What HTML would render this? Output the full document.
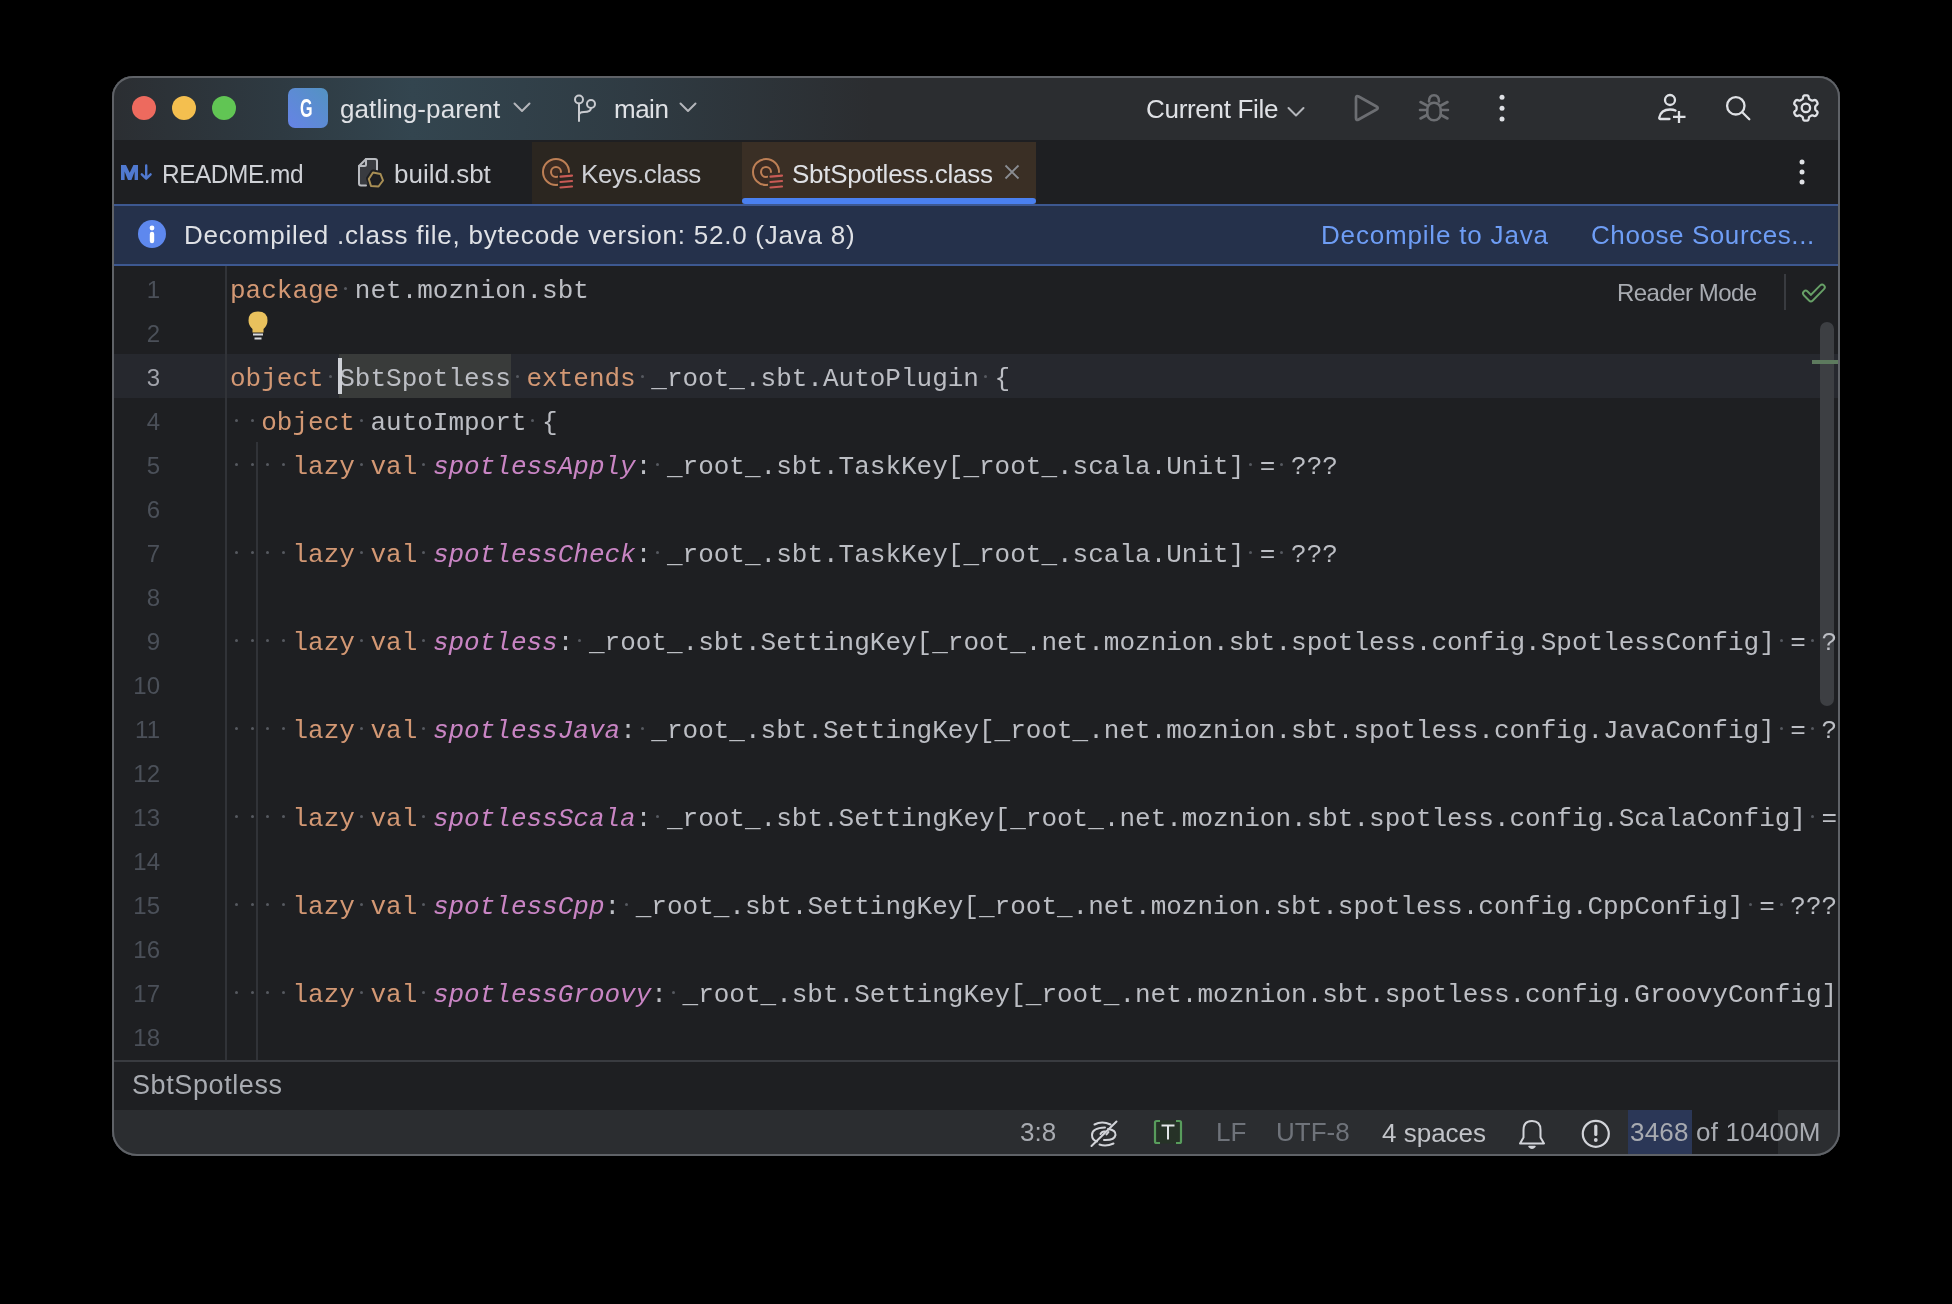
<!DOCTYPE html>
<html><head><meta charset="utf-8">
<style>
*{margin:0;padding:0;box-sizing:border-box}
html,body{width:1952px;height:1304px;background:#000;overflow:hidden}
body{font-family:"Liberation Sans",sans-serif;position:relative}
#win{will-change:transform}
.abs{position:absolute}
#win{position:absolute;left:112px;top:76px;width:1728px;height:1080px;border-radius:21px 21px 25px 25px;background:#1e1f22;overflow:hidden;box-shadow:inset 0 0 0 2px #5d6066}
#title{position:absolute;left:0;top:0;width:1728px;height:64px;background:linear-gradient(90deg,#2b2e32 0px,#2e3a42 170px,#33454f 300px,#2f3b43 520px,#2b2d30 760px,#2b2d30 100%)}
.tl{position:absolute;top:20px;width:24px;height:24px;border-radius:50%}
.ui{position:absolute;white-space:pre;color:#dfe1e5;font-size:26px;line-height:30px}
#tabs{position:absolute;left:0;top:64px;width:1728px;height:64px;background:#1e1f22}
#banner{position:absolute;left:0;top:128px;width:1728px;height:62px;background:#25314b;border-top:2px solid #3d5891;border-bottom:2px solid #3d5891}
#editor{position:absolute;left:0;top:190px;width:1728px;height:794px;background:#1e1f22;overflow:hidden}
.code{position:absolute;z-index:1;left:118px;top:0;width:1607px;height:795px;overflow:hidden;font-family:"Liberation Mono",monospace;font-size:26px;color:#bcbec4}
.ln{position:absolute;left:0;height:44px;line-height:44px;white-space:pre;padding-top:3px}
.ln b.k{font-weight:normal;color:#d39874}
.ln em{font-style:italic;color:#c985c4}
.hl{position:relative}.hl::before{content:"";position:absolute;left:0;right:0;top:-10px;height:44px;background:#393b3a;z-index:-1}
i.d{font-style:normal;position:relative}
i.d::after{content:"";position:absolute;left:5px;top:11px;width:3px;height:3px;border-radius:1.5px;background:#565960}
.nums{position:absolute;left:0;top:0;width:48px;font-family:"Liberation Sans",sans-serif;font-size:24px;color:#4b5059}
.num{position:absolute;right:0;height:44px;line-height:44px;padding-top:2px;white-space:pre;text-align:right;width:60px}
.num.cur{color:#a1a3ab}
#crumbs{position:absolute;left:0;top:984px;width:1728px;height:50px;background:#1e1f22;border-top:2px solid #393b40}
#status{position:absolute;left:0;top:1034px;width:1728px;height:46px;background:#2b2d30}
#border{position:absolute;left:112px;top:76px;width:1728px;height:1080px;border-radius:21px 21px 25px 25px;border:2px solid #5f6267;pointer-events:none}
</style></head><body>
<div id="win">
  <div id="title">
    <div class="tl" style="left:20px;background:#ed6a5e"></div>
    <div class="tl" style="left:60px;background:#f4bf4f"></div>
    <div class="tl" style="left:100px;background:#61c554"></div>
    <div class="abs" style="left:176px;top:12px;width:40px;height:40px;border-radius:7px;background:linear-gradient(45deg,#6683e6,#5393c2)"></div>
    <div class="ui" style="left:188px;top:17px;color:#fff;font-size:26px;font-weight:bold;transform:scaleX(0.62);transform-origin:left">G</div>
    <div class="ui" style="left:228px;top:18px;letter-spacing:0.1px">gatling-parent</div>
    <div class="ui" style="left:502px;top:18px;letter-spacing:-0.5px">main</div>
    <div class="ui" style="left:1034px;top:18px;letter-spacing:-0.3px">Current File</div>
  </div>
  <div id="tabs">
    <div class="abs" style="left:420px;top:2px;width:210px;height:62px;background:#2b2620"></div>
    <div class="abs" style="left:630px;top:2px;width:294px;height:62px;background:#3a2f25"></div>
    <div class="abs" style="left:630px;top:58px;width:294px;height:6px;border-radius:3px;background:#4a80f0"></div>
    <div class="ui" style="left:50px;top:19px;color:#cfd1d6;letter-spacing:-0.5px;transform:scaleX(0.94);transform-origin:left">README.md</div>
    <div class="ui" style="left:282px;top:19px;color:#cfd1d6">build.sbt</div>
    <div class="ui" style="left:469px;top:19px;color:#cfd1d6;letter-spacing:-0.44px">Keys.class</div>
    <div class="ui" style="left:680px;top:19px;color:#dfe1e5;letter-spacing:-0.27px">SbtSpotless.class</div>
  </div>
  <div id="banner">
    <div class="ui" style="left:72px;top:14px;color:#dfe1e5;letter-spacing:0.78px">Decompiled .class file, bytecode version: 52.0 (Java 8)</div>
    <div class="ui" style="left:1209px;top:14px;color:#6e9df5;letter-spacing:0.82px">Decompile to Java</div>
    <div class="ui" style="left:1479px;top:14px;color:#6e9df5;letter-spacing:0.58px">Choose Sources...</div>
  </div>
  <div id="editor">
    <div class="abs" style="left:0;top:88px;width:1728px;height:44px;background:#26282e"></div>
    <div class="abs" style="left:113px;top:0;width:2px;height:795px;background:#313338"></div>
    <div class="abs" style="left:144px;top:176px;width:2px;height:619px;background:#313338"></div>
    <div class="nums"><div class="num" style="top:0px">1</div>
<div class="num" style="top:44px">2</div>
<div class="num cur" style="top:88px">3</div>
<div class="num" style="top:132px">4</div>
<div class="num" style="top:176px">5</div>
<div class="num" style="top:220px">6</div>
<div class="num" style="top:264px">7</div>
<div class="num" style="top:308px">8</div>
<div class="num" style="top:352px">9</div>
<div class="num" style="top:396px">10</div>
<div class="num" style="top:440px">11</div>
<div class="num" style="top:484px">12</div>
<div class="num" style="top:528px">13</div>
<div class="num" style="top:572px">14</div>
<div class="num" style="top:616px">15</div>
<div class="num" style="top:660px">16</div>
<div class="num" style="top:704px">17</div>
<div class="num" style="top:748px">18</div></div>
    <div class="code"><div class="ln" style="top:0px"><b class="k">package</b><i class="d"> </i>net.moznion.sbt</div>
<div class="ln" style="top:44px"></div>
<div class="ln" style="top:88px"><b class="k">object</b><i class="d"> </i><span class="hl">SbtSpotless</span><i class="d"> </i><b class="k">extends</b><i class="d"> </i>_root_.sbt.AutoPlugin<i class="d"> </i>{</div>
<div class="ln" style="top:132px"><i class="d"> </i><i class="d"> </i><b class="k">object</b><i class="d"> </i>autoImport<i class="d"> </i>{</div>
<div class="ln" style="top:176px"><i class="d"> </i><i class="d"> </i><i class="d"> </i><i class="d"> </i><b class="k">lazy</b><i class="d"> </i><b class="k">val</b><i class="d"> </i><em>spotlessApply</em>:<i class="d"> </i>_root_.sbt.TaskKey[_root_.scala.Unit]<i class="d"> </i>=<i class="d"> </i>???</div>
<div class="ln" style="top:220px"></div>
<div class="ln" style="top:264px"><i class="d"> </i><i class="d"> </i><i class="d"> </i><i class="d"> </i><b class="k">lazy</b><i class="d"> </i><b class="k">val</b><i class="d"> </i><em>spotlessCheck</em>:<i class="d"> </i>_root_.sbt.TaskKey[_root_.scala.Unit]<i class="d"> </i>=<i class="d"> </i>???</div>
<div class="ln" style="top:308px"></div>
<div class="ln" style="top:352px"><i class="d"> </i><i class="d"> </i><i class="d"> </i><i class="d"> </i><b class="k">lazy</b><i class="d"> </i><b class="k">val</b><i class="d"> </i><em>spotless</em>:<i class="d"> </i>_root_.sbt.SettingKey[_root_.net.moznion.sbt.spotless.config.SpotlessConfig]<i class="d"> </i>=<i class="d"> </i>???</div>
<div class="ln" style="top:396px"></div>
<div class="ln" style="top:440px"><i class="d"> </i><i class="d"> </i><i class="d"> </i><i class="d"> </i><b class="k">lazy</b><i class="d"> </i><b class="k">val</b><i class="d"> </i><em>spotlessJava</em>:<i class="d"> </i>_root_.sbt.SettingKey[_root_.net.moznion.sbt.spotless.config.JavaConfig]<i class="d"> </i>=<i class="d"> </i>???</div>
<div class="ln" style="top:484px"></div>
<div class="ln" style="top:528px"><i class="d"> </i><i class="d"> </i><i class="d"> </i><i class="d"> </i><b class="k">lazy</b><i class="d"> </i><b class="k">val</b><i class="d"> </i><em>spotlessScala</em>:<i class="d"> </i>_root_.sbt.SettingKey[_root_.net.moznion.sbt.spotless.config.ScalaConfig]<i class="d"> </i>=<i class="d"> </i>???</div>
<div class="ln" style="top:572px"></div>
<div class="ln" style="top:616px"><i class="d"> </i><i class="d"> </i><i class="d"> </i><i class="d"> </i><b class="k">lazy</b><i class="d"> </i><b class="k">val</b><i class="d"> </i><em>spotlessCpp</em>:<i class="d"> </i>_root_.sbt.SettingKey[_root_.net.moznion.sbt.spotless.config.CppConfig]<i class="d"> </i>=<i class="d"> </i>???</div>
<div class="ln" style="top:660px"></div>
<div class="ln" style="top:704px"><i class="d"> </i><i class="d"> </i><i class="d"> </i><i class="d"> </i><b class="k">lazy</b><i class="d"> </i><b class="k">val</b><i class="d"> </i><em>spotlessGroovy</em>:<i class="d"> </i>_root_.sbt.SettingKey[_root_.net.moznion.sbt.spotless.config.GroovyConfig]<i class="d"> </i>=<i class="d"> </i>???</div>
<div class="ln" style="top:748px"></div></div>
    <div class="abs" style="z-index:2;left:226px;top:92px;width:4px;height:36px;background:#ced0d6"></div>
    
    <div class="ui" style="left:1505px;top:0px;height:44px;line-height:44px;padding-top:5px;color:#a8abb1;font-size:24px;letter-spacing:-0.53px">Reader Mode</div>
    <div class="abs" style="left:1672px;top:8px;width:2px;height:36px;background:#393b40"></div>
    <div class="abs" style="left:1708px;top:56px;width:14px;height:384px;border-radius:7px;background:#3d3f43"></div>
    <div class="abs" style="left:1700px;top:94px;width:28px;height:4px;background:#5d7a5e"></div>
  </div>
  <div id="crumbs">
    <div class="ui" style="left:20px;top:8px;color:#a8abb1;font-size:27px;letter-spacing:0.6px">SbtSpotless</div>
  </div>
  <div id="status">
    <div class="ui" style="left:908px;top:7px;color:#a8abb1">3:8</div>
    <div class="ui" style="left:1104px;top:7px;color:#6f737a">LF</div>
    <div class="ui" style="left:1164px;top:7px;color:#6f737a">UTF-8</div>
    <div class="ui" style="left:1270px;top:8px;color:#c2c4c9">4 spaces</div>
    <div class="abs" style="left:1516px;top:0;width:64px;height:46px;background:#2b3757"></div>
    <div class="abs" style="left:1580px;top:0;width:86px;height:46px;background:#1e1f22"></div>
    <div class="ui" style="left:1518px;top:7px;color:#a8abb1;letter-spacing:0.2px">3468 of 10400M</div>
  </div>
</div>
<div id="border"></div>
<svg style="position:absolute;left:0;top:0;z-index:10" width="1952" height="1304" viewBox="0 0 1952 1304">
<g fill="none" stroke-linecap="round" stroke-linejoin="round">
  <!-- title chevrons -->
  <path d="M514.5 103.5 L522 111 L529.5 103.5" stroke="#b4b6bb" stroke-width="2"/>
  <path d="M680.5 103.5 L688 111 L695.5 103.5" stroke="#b4b6bb" stroke-width="2"/>
  <path d="M1288.5 108 L1296 115.5 L1303.5 108" stroke="#b4b6bb" stroke-width="2"/>
  <!-- branch -->
  <g stroke="#c9cbd0" stroke-width="2">
    <circle cx="579" cy="99.5" r="4"/>
    <circle cx="591" cy="104" r="4"/>
    <path d="M579 103.5 V121 M579 115 Q579 112 584 112 Q591 112 591 108"/>
  </g>
  <!-- play -->
  <path d="M1356 98 Q1356 95 1358.6 96.5 L1376.5 106.5 Q1379 108 1376.5 109.5 L1358.6 119.5 Q1356 121 1356 118 Z" stroke="#6c6e72" stroke-width="2.7"/>
  <!-- bug -->
  <g stroke="#6c6e72" stroke-width="2.6">
    <path d="M1429 101.5 Q1429 95.2 1434 95.2 Q1439 95.2 1439 101.5"/>
    <rect x="1427.3" y="102.8" width="13.4" height="17.4" rx="6.5"/>
    <path d="M1420.5 102 L1427 105.5 M1420 110 H1427 M1420.5 118.5 L1427 115 M1447.5 102 L1441 105.5 M1448 110 H1441 M1447.5 118.5 L1441 115"/>
  </g>
  <!-- kebab -->
  <g fill="#dfe1e5" stroke="none"><circle cx="1502" cy="97.3" r="2.5"/><circle cx="1502" cy="108.2" r="2.5"/><circle cx="1502" cy="119" r="2.5"/></g>
  <!-- person add -->
  <g stroke="#dfe1e5" stroke-width="2.3">
    <circle cx="1670" cy="100" r="5"/>
    <path d="M1669.5 119 H1660 Q1659 119 1659.3 117.5 Q1661 109.5 1670 109.5 Q1673.5 109.5 1675.5 110.5"/>
    <path d="M1679 111 V123 M1673 116.8 H1685.5" stroke-linecap="butt"/>
  </g>
  <!-- search -->
  <g stroke="#dfe1e5" stroke-width="2.3">
    <circle cx="1735.8" cy="105.8" r="8.7"/>
    <path d="M1742.5 112.5 L1749.3 119.3"/>
  </g>
  <!-- gear -->
  <g stroke="#dfe1e5" stroke-width="2.3">
    <path d="M1815.20 108.00 L1815.20 107.68 L1815.20 107.35 L1815.20 107.02 L1815.24 106.69 L1815.36 106.33 L1815.65 105.93 L1816.19 105.43 L1816.85 104.86 L1817.34 104.28 L1817.55 103.76 L1817.55 103.29 L1817.45 102.86 L1817.30 102.44 L1817.11 102.04 L1816.90 101.65 L1816.67 101.27 L1816.41 100.91 L1816.13 100.57 L1815.80 100.26 L1815.39 100.03 L1814.84 99.95 L1814.10 100.09 L1813.27 100.37 L1812.57 100.59 L1812.07 100.64 L1811.71 100.57 L1811.40 100.43 L1811.11 100.27 L1810.83 100.11 L1810.55 99.95 L1810.27 99.78 L1809.99 99.62 L1809.70 99.45 L1809.43 99.25 L1809.19 98.97 L1808.98 98.52 L1808.82 97.80 L1808.66 96.94 L1808.40 96.23 L1808.05 95.79 L1807.65 95.55 L1807.22 95.42 L1806.78 95.35 L1806.34 95.31 L1805.90 95.30 L1805.46 95.31 L1805.02 95.35 L1804.58 95.42 L1804.15 95.55 L1803.75 95.79 L1803.40 96.23 L1803.14 96.94 L1802.98 97.80 L1802.82 98.52 L1802.61 98.97 L1802.37 99.25 L1802.10 99.45 L1801.81 99.62 L1801.53 99.78 L1801.25 99.95 L1800.97 100.11 L1800.69 100.27 L1800.40 100.43 L1800.09 100.57 L1799.73 100.64 L1799.23 100.59 L1798.53 100.37 L1797.70 100.09 L1796.96 99.95 L1796.41 100.03 L1796.00 100.26 L1795.67 100.57 L1795.39 100.91 L1795.13 101.27 L1794.90 101.65 L1794.69 102.04 L1794.50 102.44 L1794.35 102.86 L1794.25 103.29 L1794.25 103.76 L1794.46 104.28 L1794.95 104.86 L1795.61 105.43 L1796.15 105.93 L1796.44 106.33 L1796.56 106.69 L1796.60 107.02 L1796.60 107.35 L1796.60 107.68 L1796.60 108.00 L1796.60 108.32 L1796.60 108.65 L1796.60 108.98 L1796.56 109.31 L1796.44 109.67 L1796.15 110.07 L1795.61 110.57 L1794.95 111.14 L1794.46 111.72 L1794.25 112.24 L1794.25 112.71 L1794.35 113.14 L1794.50 113.56 L1794.69 113.96 L1794.90 114.35 L1795.13 114.73 L1795.39 115.09 L1795.67 115.43 L1796.00 115.74 L1796.41 115.97 L1796.96 116.05 L1797.70 115.91 L1798.53 115.63 L1799.23 115.41 L1799.73 115.36 L1800.09 115.43 L1800.40 115.57 L1800.69 115.73 L1800.97 115.89 L1801.25 116.05 L1801.53 116.22 L1801.81 116.38 L1802.10 116.55 L1802.37 116.75 L1802.61 117.03 L1802.82 117.48 L1802.98 118.20 L1803.14 119.06 L1803.40 119.77 L1803.75 120.21 L1804.15 120.45 L1804.58 120.58 L1805.02 120.65 L1805.46 120.69 L1805.90 120.70 L1806.34 120.69 L1806.78 120.65 L1807.22 120.58 L1807.65 120.45 L1808.05 120.21 L1808.40 119.77 L1808.66 119.06 L1808.82 118.20 L1808.98 117.48 L1809.19 117.03 L1809.43 116.75 L1809.70 116.55 L1809.99 116.38 L1810.27 116.22 L1810.55 116.05 L1810.83 115.89 L1811.11 115.73 L1811.40 115.57 L1811.71 115.43 L1812.07 115.36 L1812.57 115.41 L1813.27 115.63 L1814.10 115.91 L1814.84 116.05 L1815.39 115.97 L1815.80 115.74 L1816.13 115.43 L1816.41 115.09 L1816.67 114.73 L1816.90 114.35 L1817.11 113.96 L1817.30 113.56 L1817.45 113.14 L1817.55 112.71 L1817.55 112.24 L1817.34 111.72 L1816.85 111.14 L1816.19 110.57 L1815.65 110.07 L1815.36 109.67 L1815.24 109.31 L1815.20 108.98 L1815.20 108.65 L1815.20 108.32 Z"/>
    <circle cx="1805.9" cy="107.9" r="4.2"/>
  </g>

  <!-- tabs: M down -->
  <path d="M121 180 V165 H126 L129.7 172.8 L133.4 165 H138 V180 H134.6 V171.5 L131.4 180 H128 L124.6 171.5 V180 Z" fill="#5079d0" stroke="none"/>
  <path d="M146.2 165.5 V178.5 M141.8 174.3 L146.2 178.7 L150.6 174.3" stroke="#5079d0" stroke-width="2.4"/>
  <!-- build.sbt file icon -->
  <path d="M366 185.5 H361 Q359 185.5 359 183.5 V166 L366 159 H375 Q377 159 377 161 V172" stroke="#b9bbc0" stroke-width="2" fill="#393b40"/>
  <path d="M359 166 H364.5 Q366 166 366 164.5 V159" stroke="#b9bbc0" stroke-width="2"/>
  <path d="M373 172 L380.5 173.5 L383 180 L379 186 L371 185.5 L368.5 178.5 Z" stroke="#1e1f22" stroke-width="5" fill="#1e1f22"/>
  <path d="M373 172.5 L380.5 174 L383 180.5 L378.5 186.5 L371 186 L368.8 179 Z" stroke="#a98f55" stroke-width="2"/>
  <!-- class icons -->
  <g>
    <circle cx="556" cy="172" r="13" stroke="#bd7f55" stroke-width="2" fill="#3b2b22"/>
    <circle cx="556" cy="172" r="5" stroke="#bd7f55" stroke-width="2"/>
    <path d="M558 172.8 H574 V191 H558 Z" fill="#2b2620" stroke="none"/>
    <path d="M560.5 176.6 L572 175.6 M560.5 182 L572 181 M560.5 187.5 L572 186.5" stroke="#c85a55" stroke-width="2.2" stroke-linecap="round"/>
  </g>
  <g>
    <circle cx="766" cy="172" r="13" stroke="#bd7f55" stroke-width="2" fill="#3b2b22"/>
    <circle cx="766" cy="172" r="5" stroke="#bd7f55" stroke-width="2"/>
    <path d="M768 172.8 H784 V191 H768 Z" fill="#3a2f25" stroke="none"/>
    <path d="M770.5 176.6 L782 175.6 M770.5 182 L782 181 M770.5 187.5 L782 186.5" stroke="#c85a55" stroke-width="2.2" stroke-linecap="round"/>
  </g>
  <!-- close x -->
  <path d="M1005.5 165.5 L1018.5 178.5 M1018.5 165.5 L1005.5 178.5" stroke="#8a8d92" stroke-width="1.8" stroke-linecap="butt"/>
  <!-- tab kebab -->
  <g fill="#dfe1e5" stroke="none"><circle cx="1802" cy="162" r="2.5"/><circle cx="1802" cy="172" r="2.5"/><circle cx="1802" cy="182" r="2.5"/></g>
  <!-- info -->
  <circle cx="152" cy="234" r="14" fill="#5e88ee" stroke="none"/>
  <circle cx="152" cy="228" r="2.4" fill="#fff" stroke="none"/>
  <path d="M152 234 V241" stroke="#fff" stroke-width="4.4"/>
  <!-- lightbulb -->
  <path d="M258 311.5 Q267.5 311.5 267.5 320.5 Q267.5 325.5 263.5 329 V332.5 H252.5 V329 Q248.5 325.5 248.5 320.5 Q248.5 311.5 258 311.5 Z" fill="#e9c15d" stroke="none"/>
  <path d="M253 334.5 H263 M254.5 338.5 H261.5" stroke="#d7d9de" stroke-width="2" stroke-linecap="butt"/>
  <!-- check -->
  <path d="M1805.7 293.4 L1810.9 298.6 L1822.1 287.3" stroke="#67a067" stroke-width="7.2"/><path d="M1805.7 293.4 L1810.9 298.6 L1822.1 287.3" stroke="#1e1f22" stroke-width="3.4"/>

  <!-- status: eye slash -->
  <g stroke="#d2d4d9" stroke-width="2">
    <path d="M1094.5 1124.5 Q1102 1120.5 1110.5 1124.5"/>
    <path d="M1108 1129 Q1116 1130 1115.5 1135 Q1114.5 1140.5 1104 1140"/>
    <path d="M1105 1127.5 Q1092 1128 1092 1135 Q1092 1140 1097 1141.5"/>
    <path d="M1099.5 1144.5 Q1106 1147 1113.5 1143.5"/>
    <path d="M1100.5 1134 Q1102 1131 1105 1131.5 M1106.5 1134.5 L1108.5 1132"/>
    <path d="M1091.5 1146 L1116.5 1121.5"/>
  </g>
  <!-- [T] -->
  <rect x="1155.5" y="1120.5" width="25" height="23" fill="#263227" stroke="none"/>
  <path d="M1160 1121 H1156.5 Q1155 1121 1155 1122.5 V1141.5 Q1155 1143 1156.5 1143 H1160 M1176 1121 H1179.5 Q1181 1121 1181 1122.5 V1141.5 Q1181 1143 1179.5 1143 H1176" stroke="#589c5c" stroke-width="2.2" stroke-linecap="butt"/>
  <path d="M1161.5 1125.5 H1174.5 M1168 1125.5 V1139.5" stroke="#e2e4e8" stroke-width="2" stroke-linecap="butt"/>
  <!-- bell -->
  <g stroke="#d2d4d9" stroke-width="2">
    <path d="M1520 1143.5 L1523.5 1137.5 V1130 Q1523.5 1121 1532 1121 Q1540.5 1121 1540.5 1130 V1137.5 L1544 1143.5 Z"/>
  </g>
  <path d="M1529 1146.5 Q1532 1150 1535 1146.5 Z" fill="#d2d4d9" stroke="#d2d4d9" stroke-width="1.5"/>
  <!-- warn -->
  <circle cx="1595.8" cy="1133.8" r="13" stroke="#d2d4d9" stroke-width="2.2"/>
  <path d="M1595.8 1126 V1134.5" stroke="#d2d4d9" stroke-width="3.2"/>
  <circle cx="1595.8" cy="1140" r="1.9" fill="#d2d4d9" stroke="none"/>
</g>
</svg>

</body></html>
